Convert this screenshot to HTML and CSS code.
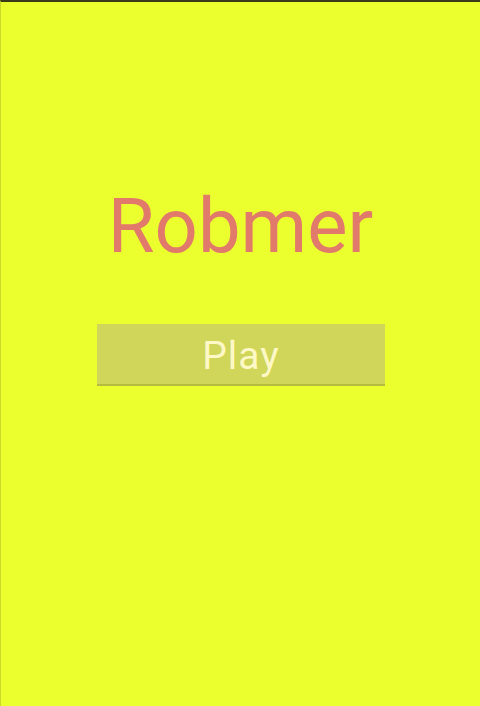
FILE: index.html
```html
<!DOCTYPE html>
<html>
<head>
<meta charset="utf-8">
<link rel="stylesheet" href="styles.css">
</head>
<body>
<div class="screen">
  <h1 class="title">Robmer</h1>
  <button class="play">Play</button>
</div>
</body>
</html>
```
FILE: styles.css
```css
html, body {
  margin: 0;
  padding: 0;
  width: 480px;
  height: 706px;
  overflow: hidden;
}
body {
  background: #ebff2e;
  font-family: Roboto, "Noto Sans", sans-serif;
}
.screen {
  height: 706px;
  box-sizing: border-box;
  border-top: 2px solid #3a3a1a;
  border-left: 1px solid #c9d82a;
  display: flex;
  flex-direction: column;
  align-items: center;
}
.title {
  margin: 180px 0 0 0;
  font-weight: 400;
  font-size: 76px;
  line-height: 88px;
  color: #e17a6b;
}
.play {
  margin-top: 54px;
  width: 288px;
  height: 62px;
  border: none;
  border-bottom: 2px solid #b5bb3e;
  background: #cfd65a;
  color: #fdf8c6;
  font-family: Roboto, "Noto Sans", sans-serif;
  font-size: 39px;
  letter-spacing: 1px;
  padding: 4px 0 0 1px;
}
```
